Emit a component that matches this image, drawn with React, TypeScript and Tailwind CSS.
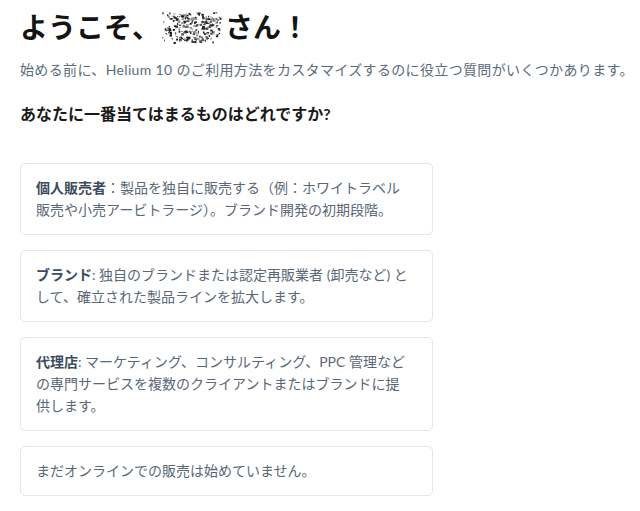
import React from "react";

function Noise() {
  const dots: React.ReactElement[] = [];
  let s = 12345;
  const rnd = () => {
    s = (s * 1103515245 + 12345) % 2147483648;
    return s / 2147483648;
  };
  for (let i = 0; i < 320; i++) {
    const cx = rnd() * 60;
    const cy = 2 + rnd() * 30;
    const dx = cx - 30;
    const dy = cy - 17;
    const inBlob = (dx * dx) / (30 * 30) + (dy * dy) / (15 * 15) < 1;
    if (!inBlob && rnd() > 0.25) continue;
    const dark = rnd();
    dots.push(
      <rect
        key={i}
        x={cx}
        y={cy}
        width={0.8 + rnd() * 2}
        height={0.8 + rnd() * 1.5}
        fill={dark > 0.45 ? "#1a1a1a" : dark > 0.2 ? "#555" : "#999"}
      />
    );
  }
  return (
    <svg width="62" height="34" viewBox="0 0 62 34" className="inline-block align-middle ml-[2px] mr-[1px]">
      {dots}
    </svg>
  );
}

const cards: { label?: string; sep?: string; text: string }[] = [
  { label: "個人販売者", sep: "：", text: "製品を独自に販売する（例：ホワイトラベル販売や小売アービトラージ）。ブランド開発の初期段階。" },
  { label: "ブランド", sep: ": ", text: "独自のブランドまたは認定再販業者 (卸売など) として、確立された製品ラインを拡大します。" },
  { label: "代理店", sep: ": ", text: "マーケティング、コンサルティング、PPC 管理などの専門サービスを複数のクライアントまたはブランドに提供します。" },
  { text: "まだオンラインでの販売は始めていません。" },
];

export default function App() {
  return (
    <div
      className="w-[640px] h-[511px] bg-white overflow-hidden px-5 pt-[8px]"
      style={{ fontFamily: 'Lato, "Noto Sans CJK JP", sans-serif' }}
    >
      <h1 className="flex items-center text-[28px] leading-[38px] font-bold text-[#141414]">
        <span>ようこそ、</span>
        <Noise />
        <span>さん！</span>
      </h1>
      <p className="mt-[13px] text-[14px] leading-[22px] text-[#5b6b7b] whitespace-nowrap tracking-[0.35px]">
        始める前に、Helium 10 のご利用方法をカスタマイズするのに役立つ質問がいくつかあります。
      </p>
      <h2 className="mt-[21px] text-[16px] leading-[24px] font-bold text-[#1a1a1a]">
        あなたに一番当てはまるものはどれですか?
      </h2>
      <div className="mt-[37px] flex flex-col gap-[15px] w-[413px]">
        {cards.map((c, i) => (
          <div
            key={i}
            className="border border-[#e3e6ea] rounded-[5px] pl-[15px] pr-[22px] py-[13px] text-[14px] leading-[22px] text-[#5a6776]"
          >
            {c.label && (
              <>
                <span className="font-bold text-[#3c4c5e]">{c.label}</span>
                <span>{c.sep}</span>
              </>
            )}
            {c.text}
          </div>
        ))}
      </div>
    </div>
  );
}
